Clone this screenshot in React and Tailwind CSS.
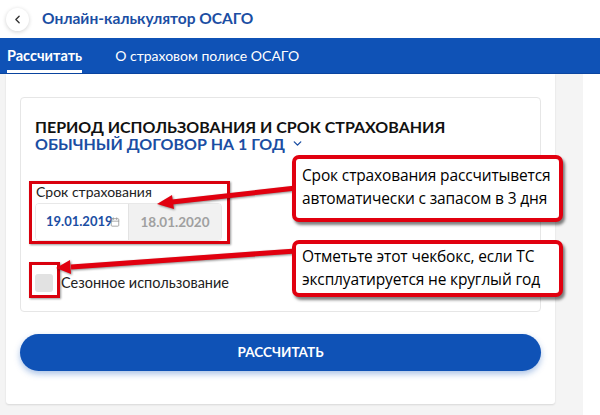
import { ChevronLeft, ChevronDown, Calendar } from "lucide-react";

// Red callout box with a short note
function Callout({ lines, className }) {
  return (
    <div
      className={`absolute rounded-[7px] border-[4px] border-[#e1000f] bg-white px-[6px] shadow-[2px_3px_3px_rgba(0,0,0,0.5)] ${className}`}
    >
      {lines.map((line) => (
        <div
          key={line}
          className="whitespace-nowrap text-[15.5px] leading-[23px] tracking-[-0.15px] text-black font-['Open_Sans',sans-serif]"
        >
          {line}
        </div>
      ))}
    </div>
  );
}

export default function App() {
  return (
    <div className="relative w-[600px] h-[415px] overflow-hidden bg-[#f4f4f4] font-['Lato',sans-serif]">
      {/* top header */}
      <header className="flex h-[38px] items-center bg-white pl-[6px]">
        <button className="flex h-[23px] w-[23px] items-center justify-center rounded-full bg-white shadow-[0_1px_4px_rgba(0,0,0,0.18)]">
          <ChevronLeft className="h-[13px] w-[13px] text-[#333]" strokeWidth={2.5} />
        </button>
        <h1 className="ml-[13px] text-[15.5px] font-bold text-[#1b4ea3]">Онлайн-калькулятор ОСАГО</h1>
      </header>

      {/* tabs */}
      <nav className="flex h-[36px] items-stretch bg-[#0f52b6] border-b border-[#0b45a0]">
        <div className="ml-[7px] flex items-center border-b-[3px] border-white pt-[3px] text-[14.5px] font-bold text-white">
          Рассчитать
        </div>
        <div className="ml-[33px] flex items-center text-[14px] text-white">О страховом полисе ОСАГО</div>
      </nav>

      <div className="flex h-[341px]">
        <div className="w-[6px]" />
        <main className="h-[330px] w-[549px] rounded-b-[3px] bg-white px-[14px] pt-[23px] shadow-[0_1px_2px_rgba(0,0,0,0.12)]">
          <section className="h-[215px] rounded-[4px] border border-[#e6e6e6] px-[14px] pt-[20px]">
            <h2 className="text-[16px] font-bold uppercase leading-[17px] text-[#111]">
              Период использования и срок страхования
            </h2>
            <div className="flex items-center gap-[6px] text-[16px] font-bold uppercase leading-[17px] text-[#1b4ea3]">
              Обычный договор на 1 год
              <ChevronDown className="h-[13px] w-[13px]" strokeWidth={2.5} />
            </div>

            <div className="mt-[32px] ml-[1px] text-[14px] leading-[16px] text-[#222]">Срок страхования</div>
            <div className="mt-[3px] flex h-[38px] w-[187px] overflow-hidden rounded-[4px] border border-[#e8e8e8]">
              <div className="flex w-[92px] items-center bg-white pl-[10px] text-[13px] font-bold text-[#1b4ea3]">
                19.01.2019
                <Calendar className="-ml-[3px] h-[10px] w-[10px] text-[#999]" strokeWidth={2} />
              </div>
              <div className="flex flex-1 items-center justify-center border-l border-[#e3e3e3] bg-[#f1f1f1] text-[13.5px] font-bold text-[#a0a0a0]">
                18.01.2020
              </div>
            </div>

            <label className="mt-[31px] flex items-center gap-[8px]">
              <span className="h-[18px] w-[18px] rounded-[3px] bg-[#e2e2e2]" />
              <span className="text-[14.5px] text-[#222]">Сезонное использование</span>
            </label>
          </section>

          <button className="mt-[22px] flex h-[37px] w-[521px] items-center justify-center rounded-full bg-[#0f52b6] text-[13.5px] font-bold text-white shadow-[0_3px_6px_rgba(15,82,182,0.35)]">
            РАССЧИТАТЬ
          </button>
        </main>
        <div className="w-[28px]" />
        <div className="flex-1 bg-white" />
      </div>

      {/* annotation frames */}
      <div className="absolute left-[29px] top-[181px] h-[63px] w-[201px] border-[3px] border-[#d9000d] shadow-[1px_1px_2px_rgba(0,0,0,0.4)]" />
      <div className="absolute left-[29px] top-[262px] h-[36px] w-[31px] border-[3px] border-[#d9000d] shadow-[1px_1px_2px_rgba(0,0,0,0.4)]" />

      {/* annotation arrows */}
      <svg className="absolute left-0 top-0 drop-shadow-[1px_1px_1px_rgba(0,0,0,0.45)]" width="600" height="415">
        <line x1="296" y1="188" x2="172" y2="202" stroke="#e1000f" strokeWidth="5" />
        <polygon points="157,204 172,195 174,209" fill="#e1000f" />
        <line x1="296" y1="251" x2="71" y2="267" stroke="#e1000f" strokeWidth="5" />
        <polygon points="56,268 70,260 71,274" fill="#e1000f" />
      </svg>

      <Callout
        className="left-[292px] top-[155px] w-[271px] h-[67px] pt-[5px]"
        lines={["Срок страхования рассчитывется", "автоматически с запасом в 3 дня"]}
      />
      <Callout
        className="left-[292px] top-[240px] w-[271px] h-[57px] pt-[1px]"
        lines={["Отметьте этот чекбокс, если ТС", "эксплуатируется не круглый год"]}
      />
    </div>
  );
}
